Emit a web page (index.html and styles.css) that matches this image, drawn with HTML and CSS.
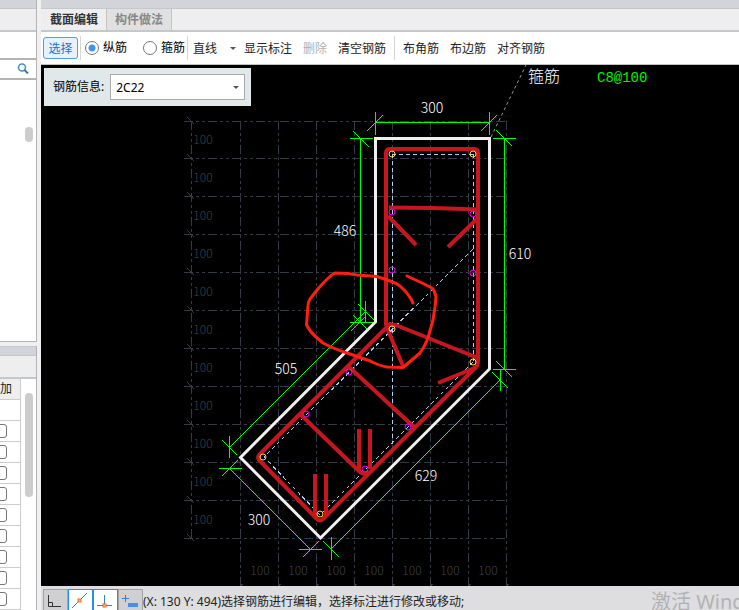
FILE: index.html
```
<!DOCTYPE html>
<html lang="zh-CN">
<head>
<meta charset="utf-8">
<title>截面编辑</title>
<link rel="stylesheet" href="styles.css">
</head>
<body>
<div class="app">
  <aside class="sidebar">
    <section class="panel panel-top">
      <div class="strip"></div>
      <div class="panel-head"></div>
      <div class="tools"></div>
      <button class="search" type="button" aria-label="搜索">
        <svg width="12" height="12" viewBox="0 0 12 12"><circle cx="5" cy="4.500" r="3.500" fill="#fff" stroke="#3d94c6" stroke-width="1.600"/><path d="M7.500 7L11 10.500" stroke="#2c7fb0" stroke-width="2"/></svg>
      </button>
      <div class="list"><span class="thumb"></span></div>
    </section>
    <section class="panel panel-bottom">
      <div class="strip"></div>
      <div class="panel-head"></div>
      <div class="table-area">
        <table>
          <thead><tr><th>加</th></tr></thead>
          <tbody>
            <tr><td></td></tr>
            <tr><td><input type="checkbox" aria-label="附加 1"></td></tr>
            <tr><td><input type="checkbox" aria-label="附加 2"></td></tr>
            <tr><td><input type="checkbox" aria-label="附加 3"></td></tr>
            <tr><td><input type="checkbox" aria-label="附加 4"></td></tr>
            <tr><td><input type="checkbox" aria-label="附加 5"></td></tr>
            <tr><td><input type="checkbox" aria-label="附加 6"></td></tr>
            <tr><td><input type="checkbox" aria-label="附加 7"></td></tr>
            <tr><td><input type="checkbox" aria-label="附加 8"></td></tr>
            <tr><td><input type="checkbox" aria-label="附加 9"></td></tr>
          </tbody>
        </table>
        <span class="thumb thumb-long"></span>
      </div>
    </section>
  </aside>

  <main class="editor">
    <div class="strip"></div>
    <nav class="tabs">
      <button class="tab tab-active" type="button">截面编辑</button>
      <button class="tab" type="button">构件做法</button>
    </nav>
    <div class="toolbar">
      <button class="tool tool-active" type="button">选择</button>
      <span class="sep"></span>
      <label class="radio"><input type="radio" name="bar" checked>纵筋</label>
      <label class="radio"><input type="radio" name="bar">箍筋</label>
      <span class="sep"></span>
      <span class="dropdown shape"><select aria-label="绘制方式"><option>直线</option></select></span>
      <button class="tool" type="button">显示标注</button>
      <button class="tool" type="button" disabled>删除</button>
      <button class="tool" type="button">清空钢筋</button>
      <span class="sep sep-wide"></span>
      <button class="tool" type="button">布角筋</button>
      <button class="tool" type="button">布边筋</button>
      <button class="tool" type="button">对齐钢筋</button>
    </div>

    <div class="canvas">
      <svg class="drawing" viewBox="41 65 698 521" preserveAspectRatio="xMinYMin slice">
        <g class="grid">
          <path d="M184 121.500H507M184 158.500H507M184 196.500H507M184 234.500H507M184 272.500H507M184 310.500H507M184 348.500H507M184 386.500H507M184 424.500H507M184 462.500H507M184 500.500H507M184 538.500H507"/>
          <path d="M191.500 121V539M240.500 121V586M278.500 121V586M316.500 121V586M354.500 121V586M392.500 121V586M430.500 121V586M468.500 121V586M506.500 121V586"/>
        </g>
        <path class="grid-tick" d="M187 117l7 7M187 154l7 7M187 192l7 7M187 230l7 7M187 268l7 7M187 306l7 7M187 344l7 7M187 382l7 7M187 420l7 7M187 458l7 7M187 496l7 7M187 534l7 7M240 586l3 -2M278 586l3 -2M316 586l3 -2M354 586l3 -2M392 586l3 -2M430 586l3 -2M468 586l3 -2M506 586l3 -2"/>
        <g class="grid-text">
          <text x="203" y="144">100</text><text x="203" y="182">100</text><text x="203" y="220">100</text><text x="203" y="258">100</text><text x="203" y="296">100</text><text x="203" y="334">100</text><text x="203" y="372">100</text><text x="203" y="410">100</text><text x="203" y="448">100</text><text x="203" y="486">100</text><text x="203" y="524">100</text>
          <text x="260" y="575">100</text><text x="298" y="575">100</text><text x="336" y="575">100</text><text x="374" y="575">100</text><text x="412" y="575">100</text><text x="450" y="575">100</text><text x="488" y="575">100</text>
        </g>

        <g class="dim">
          <path d="M375 122.500H490M375.500 112V135M489.500 112V135M367 131l16 -16M481 131l16 -16"/>
          <path d="M360.500 138V322M350 138.500H373M353 131l16 16M350 322.500H375M353 315l16 16M351 331l14 -14"/>
          <path d="M365 312L229 448M365.500 301V323M358 304l16 16M229.500 436V458M222 440l15 15"/>
          <path d="M229 468L310 549M219 468.500H242M222 476l16 -16M299 549.500H322M303 557l16 -16"/>
          <path d="M331 549L500 380M331.500 537V560M323 541l16 16M500.500 369V391M492 372l16 16"/>
          <path d="M504.500 138V369M493 138.500H516M496 130l16 16M493 369.500H516M496 361l16 16"/>
        </g>
        <path class="leader" d="M491 137L526 65"/>

        <path class="outline" d="M375.500 138.500H489.500V369L320.500 538L240.500 457.500L375.500 322Z"/>

        <g class="axis">
          <path d="M392 154.500H473M392.500 154V444M473.500 154V362"/>
          <path d="M473 249L264 457L320 515L473 362"/>
        </g>
        <g class="stirrup">
          <path d="M386 326V153Q386 149 390 149H474Q478 149 478 153V362Q478 365 476 367L323 519Q320 522 317 519L259 460Q257 457 260 454L390 324L397 325.500L478 358"/>
          <path d="M389 207.500L433 208L478 209.500M388 216L416 245M478 218L448 247"/>
          <path d="M387 328L403 366M477 367L438 383"/>
          <path d="M348 366L414 427M300 414L360 472Q365 476 369 471"/>
          <path d="M359 429V471M370 429V469M315 474V517M326 474V516"/>
        </g>
        <g class="corner">
          <circle cx="392" cy="154" r="3"/><circle cx="473" cy="154" r="3"/><circle cx="392" cy="329" r="3"/><circle cx="473" cy="362" r="3"/><circle cx="263" cy="457" r="3"/><circle cx="320" cy="514" r="3"/>
        </g>
        <g class="edge">
          <circle cx="392" cy="212" r="3"/><circle cx="473" cy="214" r="3"/><circle cx="392" cy="270" r="3"/><circle cx="473" cy="273" r="3"/><circle cx="349" cy="372" r="3"/><circle cx="306" cy="414" r="3"/><circle cx="408" cy="427" r="3"/><circle cx="365" cy="469" r="3"/>
        </g>

        <g class="dim-text">
          <text x="432" y="113">300</text><text x="345" y="236">486</text><text x="520" y="259">610</text><text x="286" y="374">505</text><text x="259" y="525">300</text><text x="426" y="481">629</text>
        </g>
        <text class="tag" x="528" y="82">箍筋</text>
        <text class="spec" x="597" y="82">C8@100</text>

        <path class="markup" d="M413 303L411 299Q408 294 405 291L400 286Q396 283 390 281L377 276.500L357 275L348 273.500L335 273Q329 276 317 290L310 299Q308 302 308 306L306.500 325Q310 332 316 337L323 343Q334 349 350 354L370 361Q380 366 387 367L403 367.500L420 353Q425 346 428 338L433 320L435 307L436 297Q435 291 432 288L422 283L407 276"/>
      </svg>

      <div class="info">
        <label for="bar-info">钢筋信息:</label>
        <span class="dropdown combo"><select id="bar-info"><option>2C22</option></select></span>
      </div>
    </div>

    <footer class="status">
      <button class="snap" type="button" aria-label="正交"><svg width="23" height="20" viewBox="0 0 23 20"><path d="M4.500 5V16.500H17M4.500 12.500H8.500V16.500" fill="none" stroke="#333"/></svg></button>
      <button class="snap snap-on" type="button" aria-label="中点"><svg width="23" height="20" viewBox="0 0 23 20"><path d="M3 18L18 3" stroke="#3a7fd0"/><rect x="9" y="9" width="3" height="3" fill="#f5b887" stroke="#f07020"/></svg></button>
      <button class="snap snap-on" type="button" aria-label="垂足"><svg width="23" height="20" viewBox="0 0 23 20"><path d="M3 15.500H18M10.500 5V15" stroke="#3a7fd0"/><rect x="9" y="14" width="3" height="3" fill="#f5b887" stroke="#f07020"/></svg></button>
      <button class="snap" type="button" aria-label="动态输入"><svg width="23" height="20" viewBox="0 0 23 20"><path d="M3 8.500H10M6.500 5V12" stroke="#3a7fd0"/><rect x="9" y="13" width="10" height="4" fill="#4a8fe0"/></svg></button>
      <span class="message">(X: 130 Y: 494)选择钢筋进行编辑，选择标注进行修改或移动;</span>
      <span class="watermark">激活 Windows</span>
    </footer>
  </main>
</div>
</body>
</html>
```
FILE: styles.css
```
* { box-sizing: border-box; }

body {
  margin: 0;
  font: 12px/16px "Noto Sans", "Noto Sans CJK SC", sans-serif;
  color: #222;
  background: #f0f0f2;
}

button, select, input { font: inherit; color: inherit; margin: 0; }
button { padding: 0; border: 0; background: none; white-space: nowrap; }

.app {
  display: grid;
  grid-template-columns: 37px minmax(0, 1fr);
  column-gap: 4px;
  height: 100vh;
  overflow: hidden;
}

.strip { height: 9px; flex: none; background: #d3d4da; border-bottom: 1px solid #c3c8cc; }

/* Left panels */
.sidebar { display: flex; flex-direction: column; gap: 4px; min-height: 0; }
.panel { display: flex; flex-direction: column; border-right: 1px solid #b4b4b4; background: #fff; }
.panel-top { flex: 0 0 342px; border-bottom: 1px solid #b4b4b4; }
.panel-bottom { flex: 1; min-height: 0; }
.panel-bottom .strip { height: 10px; border-top: 1px solid #c3c8cc; }
.panel-head { height: 23px; flex: none; background: #eee; border-bottom: 2px solid #c3c8cc; }
.tools { height: 28px; border-bottom: 2px solid #b4b4b4; }
.search { height: 20px; padding-right: 7px; border-bottom: 2px solid #b4b4b4; display: flex; align-items: center; justify-content: flex-end; }
.list { flex: 1; display: flex; justify-content: flex-end; padding: 47px 3px 0 0; }
.thumb { width: 8px; height: 15px; border-radius: 4px; background: #ccc; }
.thumb-long { height: 104px; margin: 14px 3px 0 auto; }
.table-area { display: flex; align-items: flex-start; }
table { width: 21px; border-collapse: separate; border-spacing: 0; border-right: 1px solid #ccc; }
th, td { height: 21px; padding: 0; border-bottom: 1px solid #ccc; vertical-align: middle; line-height: 18px; }
th { font-weight: 400; text-align: left; background: #eee; }
td input { appearance: none; display: block; width: 14px; height: 14px; margin-left: -7px; border: 1px solid #777; border-radius: 3px; }

/* Editor */
.editor { display: flex; flex-direction: column; min-width: 0; min-height: 0; }
.tabs { display: flex; flex: none; height: 23px; background: #eee; border-bottom: 2px solid #c3c8cc; }
.tab { padding: 1px 8px 0 9px; font-weight: 700; color: #888; background: #e0e0e0; border-right: 1px solid #c3c3c3; }
.tab + .tab { padding-left: 8px; }
.tab-active { color: #333; background: #eee; }

.toolbar { display: flex; align-items: center; flex: none; gap: 1px; height: 33px; padding: 0 2px; background: #fff; border-bottom: 1px solid #c3c3c3; }
.tool { height: 22px; padding: 2px 5px 0; border-radius: 3px; }
.tool:disabled { color: #b0b0b0; }
.tool-active { width: 35px; padding: 1px 0 0; color: #1a73d9; background: #e6f2fd; border: 1px solid #4a9df5; }
.sep { width: 1px; height: 24px; margin: 0 1px; background: #d4d4d4; }
.sep-wide { margin: 0 2px; }
.radio { display: flex; align-items: center; gap: 4px; margin: 0 0 0 2px; color: #000; }
.radio + .radio { margin-left: 15px; }
.radio input { appearance: none; width: 14px; height: 14px; border: 1px solid #777; border-radius: 50%; background: #fff; }
.radio input:checked { background: radial-gradient(circle, #3d94f6 3px, #fff 4px); }

.dropdown { position: relative; display: flex; }
.dropdown::after { content: ""; position: absolute; right: 5px; top: 50%; margin-top: -1px; border: 3px solid transparent; border-top-color: #555; border-bottom: 0; }
.dropdown select { appearance: none; width: 100%; border: 0; background: none; padding: 2px 0 0; }
.shape { width: 48px; height: 22px; }
.shape::after { right: 2px; }
.shape select { padding-left: 3px; }

.canvas { position: relative; flex: 1; min-height: 0; background: #000; overflow: hidden; }
.drawing { display: block; width: 100%; height: 100%; }
.info { position: absolute; left: 3px; top: 3px; display: flex; align-items: center; gap: 6px; height: 38px; padding: 0 6px 0 9px; background: #e0e8ea; color: #000; }
.combo { width: 135px; height: 26px; background: #fff; border: 1px solid #aaa; }
.combo select { padding-left: 5px; }

.status { position: relative; display: flex; align-items: stretch; flex: none; height: 24px; padding: 3px 0 0 2px; background: #dedee0; overflow: hidden; }
.snap { width: 25px; background: #d0d0d3; border: 1px solid #a4a4a4; border-bottom: 0; overflow: hidden; }
.snap svg { display: block; }
.snap-on { background: #fff; border-color: #2090ff; }
.message { line-height: 26px; white-space: nowrap; }
.watermark { position: absolute; left: calc(100% - 88px); top: 2px; font-size: 20px; line-height: 28px; white-space: nowrap; color: #b2b2b4; }

/* Drawing */
.drawing path, .drawing circle { fill: none; }
.grid { stroke: #343a46; stroke-dasharray: 9 3 3 3 3 3; shape-rendering: crispEdges; }
.grid-tick { stroke: #343a46; shape-rendering: crispEdges; }
.grid-text { fill: #3e4450; font: 300 12px "Noto Sans CJK SC", sans-serif; text-anchor: middle; }
.dim { stroke: #00ff00; shape-rendering: crispEdges; }
.dim-text { fill: #fff; font: 300 14px "Noto Sans CJK SC", sans-serif; text-anchor: middle; }
.leader { stroke: #999; stroke-dasharray: 3 3; }
.outline { stroke: #f0f0f0; stroke-width: 3; }
.axis { stroke: #a9d0f5; stroke-dasharray: 4 3; shape-rendering: crispEdges; }
.corner { stroke: #ffe040; }
.edge { stroke: #f000f0; }
.stirrup { stroke: #c8161f; stroke-width: 4; stroke-linejoin: round; }
.tag { fill: #fff; font: 300 16px "Noto Sans CJK SC", sans-serif; }
.spec { fill: #00f000; font: 14px "Liberation Mono", monospace; }
.markup { stroke: #ff1e10; stroke-width: 3; stroke-linecap: round; stroke-linejoin: round; }
```
